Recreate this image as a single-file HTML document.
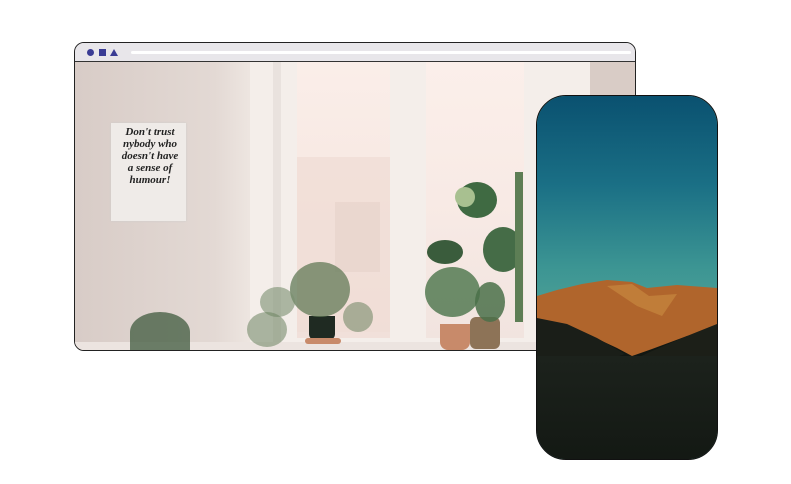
<!DOCTYPE html>
<html><head><style>
body{margin:0;width:791px;height:484px;background:#fff;position:relative;overflow:hidden;font-family:"Liberation Sans",sans-serif}
.a{position:absolute}
</style></head><body>
<div class="a" style="left:74px;top:42px;width:560px;height:307px;border:1.5px solid #222;border-radius:10px;overflow:hidden;background:#e4e1e4">
  <div class="a" style="left:0;top:0;width:560px;height:18px;background:#e8e6ea;border-bottom:1.5px solid #333"></div>
  <div class="a" style="left:12px;top:6px;width:7px;height:7px;border-radius:50%;background:#3a3c94"></div>
  <div class="a" style="left:24px;top:6px;width:7px;height:7px;background:#3a3c94"></div>
  <div class="a" style="left:35px;top:6px;width:0;height:0;border-left:4px solid transparent;border-right:4px solid transparent;border-bottom:7px solid #3a3c94"></div>
  <div class="a" style="left:56px;top:8px;width:500px;height:3px;background:#fff;border-radius:2px"></div>
  <div class="a" style="left:0;top:19px;width:560px;height:290px;background:linear-gradient(90deg,#d8ccc7 0%,#e3d9d4 25%,#ede5e0 31%)">
    <div class="a" style="left:175px;top:0;width:340px;height:290px;background:#f4eeea"></div>
    <div class="a" style="left:198px;top:0;width:8px;height:290px;background:#e9e2de"></div>
    <div class="a" style="left:222px;top:0;width:93px;height:276px;background:linear-gradient(180deg,#faeee9 0%,#f8e9e3 40%,#f1e0da 100%)"></div>
    <div class="a" style="left:351px;top:0;width:98px;height:276px;background:linear-gradient(180deg,#fbefea 0%,#f8eae5 50%,#f1e4df 100%)"></div>
    <div class="a" style="left:222px;top:95px;width:93px;height:175px;background:#f0ddd6;opacity:.8"></div>
    <div class="a" style="left:260px;top:140px;width:45px;height:70px;background:#e8d4cd;opacity:.8"></div>
    <div class="a" style="left:515px;top:0;width:45px;height:290px;background:#d9ccc6"></div>
    <div class="a" style="left:0;top:280px;width:560px;height:10px;background:#ece4e0"></div>
    <div class="a" style="left:36px;top:61px;width:75px;height:98px;background:#efebe8;box-shadow:0 0 2px #ccc"></div>
    <div class="a" style="left:40px;top:64px;width:70px;font:italic bold 11px/12px 'Liberation Serif',serif;color:#222;text-align:center">Don't trust<br>nybody who<br>doesn't have<br>a sense of<br>humour!</div>
    <div class="a" style="left:234px;top:254px;width:26px;height:24px;background:#1f2a22;border-radius:0 0 6px 6px"></div>
    <div class="a" style="left:230px;top:276px;width:36px;height:6px;background:#c88a6a;border-radius:3px"></div>
    <div class="a" style="left:215px;top:200px;width:60px;height:55px;background:#617a57;border-radius:50%;opacity:.75"></div>
    <div class="a" style="left:185px;top:225px;width:35px;height:30px;background:#7a9070;border-radius:50%;opacity:.6"></div>
    <div class="a" style="left:172px;top:250px;width:40px;height:35px;background:#6c8460;border-radius:50%;opacity:.55"></div>
    <div class="a" style="left:268px;top:240px;width:30px;height:30px;background:#6c8460;border-radius:50%;opacity:.55"></div>
    <div class="a" style="left:365px;top:262px;width:30px;height:26px;background:#c88a6a;border-radius:0 0 8px 8px"></div>
    <div class="a" style="left:395px;top:255px;width:30px;height:32px;background:#8d7357;border-radius:6px"></div>
    <div class="a" style="left:382px;top:120px;width:40px;height:36px;background:#3f6a42;border-radius:50%"></div>
    <div class="a" style="left:380px;top:125px;width:20px;height:20px;background:#a8c090;border-radius:50%"></div>
    <div class="a" style="left:352px;top:178px;width:36px;height:24px;background:#3a5c3c;border-radius:50%"></div>
    <div class="a" style="left:408px;top:165px;width:40px;height:45px;background:#456c47;border-radius:50%"></div>
    <div class="a" style="left:350px;top:205px;width:55px;height:50px;background:#537a52;border-radius:50%;opacity:.85"></div>
    <div class="a" style="left:400px;top:220px;width:30px;height:40px;background:#4a7049;border-radius:50%;opacity:.85"></div>
    <div class="a" style="left:440px;top:110px;width:8px;height:150px;background:#5d7e55"></div>
    <div class="a" style="left:55px;top:250px;width:60px;height:40px;background:#3f5a3d;border-radius:50% 50% 0 0;opacity:.75"></div>
  </div>
</div>
<div class="a" style="left:536px;top:95px;width:180px;height:363px;border:1.5px solid #111;border-radius:30px;overflow:hidden;background:#4ea096">
  <div class="a" style="left:0;top:0;width:180px;height:220px;background:linear-gradient(180deg,#0a5170 0%,#1a6f85 40%,#3c9593 78%,#4ea096 100%)"></div>
  <div class="a" style="left:0;top:220px;width:180px;height:150px;background:#121712"></div>
  <svg class="a" style="left:0;top:180px" width="180" height="110" viewBox="0 0 180 110">
    <path d="M0 20 L20 14 L45 8 L70 4 L95 6 L110 12 L140 9 L180 12 L180 55 L150 60 L115 73 L95 80 L80 72 L50 58 L0 44Z" fill="#b0652c"/>
    <path d="M70 10 L95 8 L112 20 L140 18 L125 40 L100 30 Z" fill="#c8873e" opacity=".7"/>
    <path d="M0 42 L30 48 L60 62 L88 78 L60 88 L0 88Z" fill="#1a1e18"/>
    <path d="M180 48 L150 60 L115 75 L100 82 L180 82Z" fill="#1c1f18"/>
  </svg>
  <div class="a" style="left:0;top:260px;width:180px;height:110px;background:linear-gradient(180deg,#1c221c,#131813)"></div>
</div>
</body></html>
